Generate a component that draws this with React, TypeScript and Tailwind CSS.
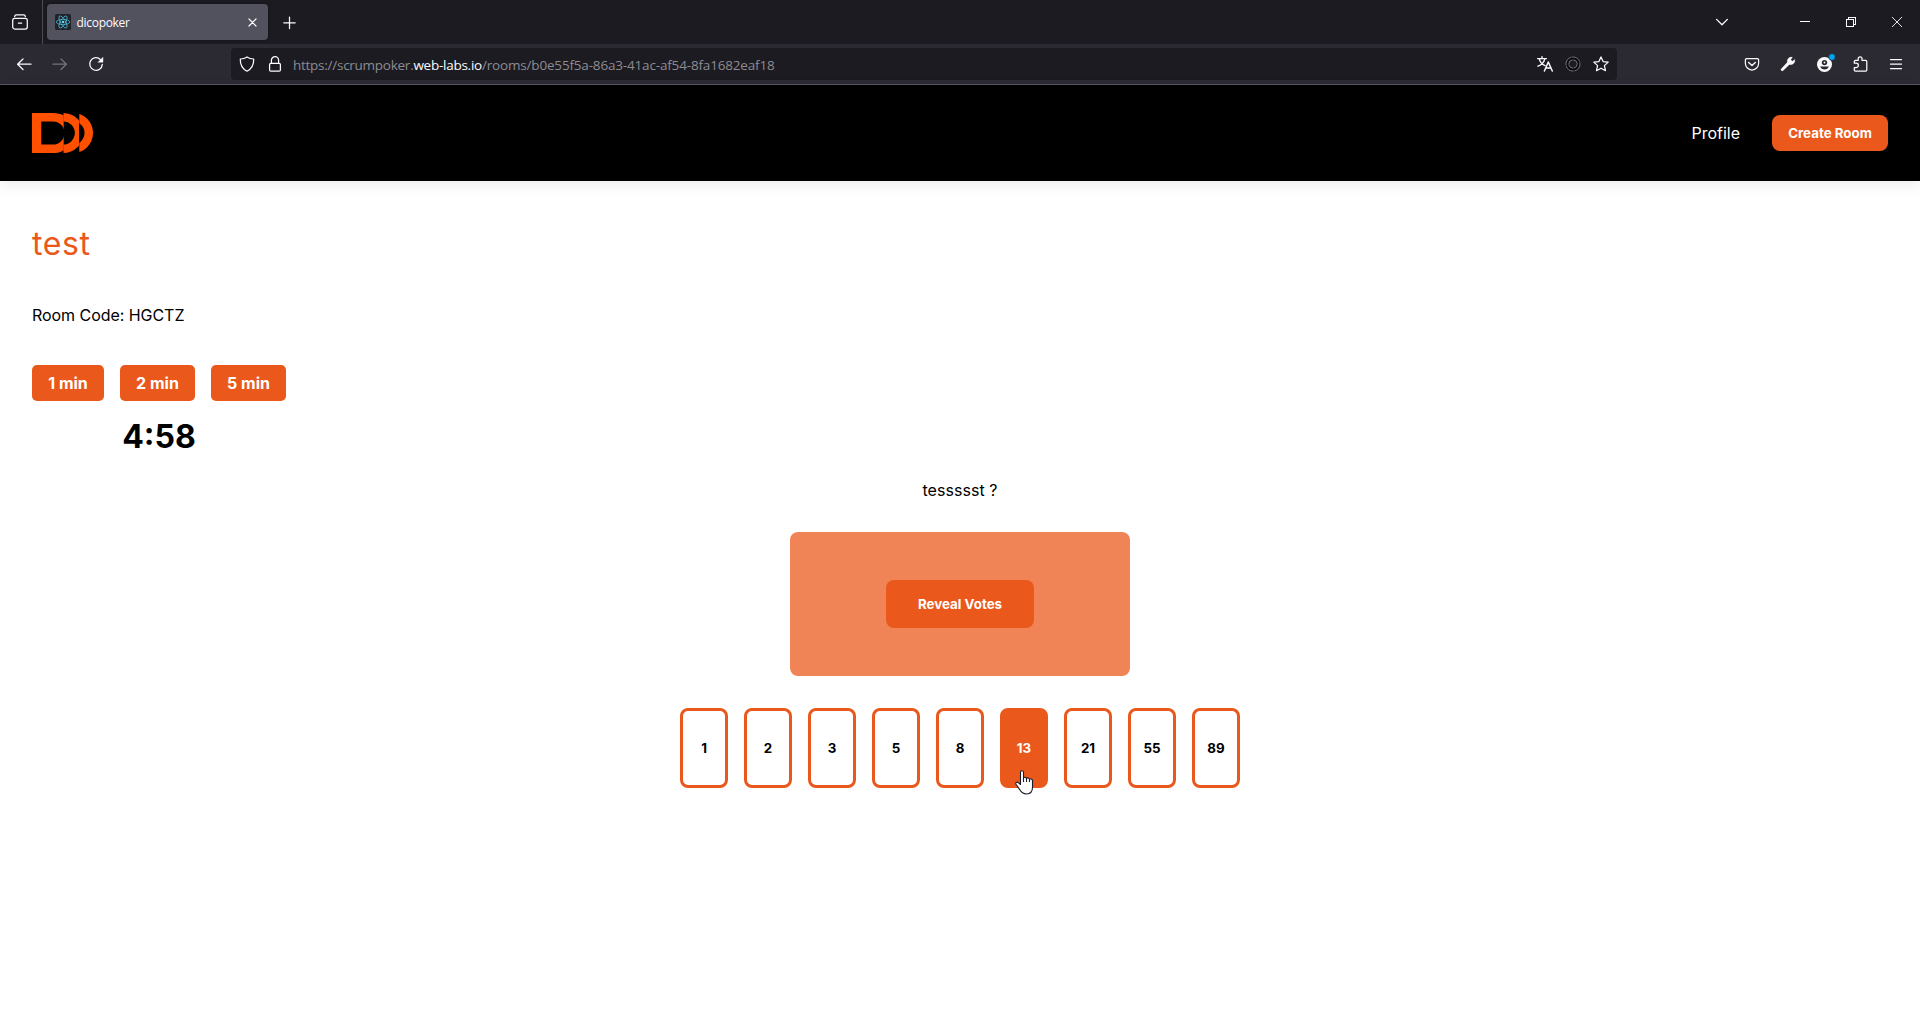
import type { ReactNode } from "react";

const CARDS = [1, 2, 3, 5, 8, 13, 21, 55, 89];
const SELECTED = 13;

const TIMERS = [
  { minutes: 1, width: "w-[72px]" },
  { minutes: 2, width: "w-[75px]" },
  { minutes: 5, width: "w-[75px]" },
];

function Icon({ children, className = "" }: { children: ReactNode; className?: string }) {
  return (
    <svg
      viewBox="0 0 16 16"
      className={`block size-4 shrink-0 overflow-visible ${className}`}
      fill="none"
      stroke="currentColor"
      strokeWidth="1.25"
      strokeLinecap="round"
      strokeLinejoin="round"
    >
      {children}
    </svg>
  );
}

function ReactFavicon() {
  return (
    <svg viewBox="0 0 16 16" className="block size-4 shrink-0">
      <rect width="16" height="16" rx="1.5" fill="#20232a" />
      <g fill="none" stroke="#4fb3cb" strokeWidth="0.8">
        <ellipse cx="8" cy="8" rx="6.8" ry="2.6" />
        <ellipse cx="8" cy="8" rx="6.8" ry="2.6" transform="rotate(60 8 8)" />
        <ellipse cx="8" cy="8" rx="6.8" ry="2.6" transform="rotate(120 8 8)" />
      </g>
      <circle cx="8" cy="8" r="1.3" fill="#61dafb" />
    </svg>
  );
}

function TabBar() {
  return (
    <div className="flex h-11 items-center bg-[#1c1b22] text-[#fbfbfe]">
      <div className="flex h-full w-[43px] items-center border-r border-[#4a4a55] pl-3">
        <Icon>
          <path d="M2.6 2.6C2.7 1.4 3.4.9 4.4.9h7.2c1 0 1.7.5 1.8 1.7" />
          <rect x="0.7" y="4.4" width="14.6" height="10.6" rx="2" />
          <path d="M6.4 9.2h3.2" />
        </Icon>
      </div>
      <div className="ml-1 flex h-9 w-[221px] items-center rounded bg-[#52525e] pl-2 pr-[11px] shadow-[0_0_3px_rgba(0,0,0,0.4)]">
        <ReactFavicon />
        <span className="ml-[5.5px] mt-[2px] flex-1 font-['Open_Sans','Noto_Sans',sans-serif] text-[12px] leading-4 tracking-[-0.3px]">
          dicopoker
        </span>
        <svg viewBox="0 0 9 9" className="block size-[9px]" stroke="currentColor" strokeWidth="1.2" strokeLinecap="round">
          <path d="M1 1l7 7M8 1L1 8" />
        </svg>
      </div>
      <Icon className="ml-[13px]">
        <path d="M8.500 3v11.500M2.800 8.800h11.400" />
      </Icon>
      <div className="ml-auto flex items-center">
        <Icon className="mr-[70px]">
          <path d="M2.600 5.400L8 10.800l5.400-5.400" strokeWidth="1.300" />
        </Icon>
        <svg viewBox="0 0 10 10" className="mr-9 block size-[10px]" stroke="currentColor" shapeRendering="crispEdges">
          <path d="M0 4.500h10" />
        </svg>
        <svg viewBox="0 0 10 10" className="mr-9 block size-[10px]" stroke="currentColor" fill="none" shapeRendering="crispEdges">
          <path d="M.5 2.500h7v7h-7zM2.500 2V.5h7v7H8" />
        </svg>
        <svg viewBox="0 0 10 10" className="mr-[18px] block size-[10px]" stroke="currentColor">
          <path d="M0 0l10 10M10 0L0 10" strokeWidth="0.900" />
        </svg>
      </div>
    </div>
  );
}

function Toolbar() {
  return (
    <div className="flex h-[41px] items-center border-b border-[#55545f] bg-[#2b2a33] text-[#fbfbfe]">
      <Icon className="ml-4">
        <path d="M15 8.200H1.600M7 3L1.600 8.200 7 13.500" />
      </Icon>
      <Icon className="ml-5 text-[#75747b]">
        <path d="M1 8.200h13.400M9 3l5.400 5.200L9 13.500" />
      </Icon>
      <Icon className="ml-5">
        <path d="M14.300 8.400A6.300 6.300 0 1 1 12.600 3.700" />
        <path d="M15 1.400v4.900h-4.900z" fill="currentColor" strokeWidth="0.400" />
      </Icon>
      <div className="ml-[127px] flex h-8 w-[1386px] items-center rounded bg-[#1c1b22] pl-2 pr-2">
        <Icon>
          <path d="M8 .9c1.800 1.300 4.200 2 6.700 2.100.2 5.600-2 9.800-6.700 12.200C3.300 12.800 1.100 8.600 1.300 3 3.800 2.900 6.200 2.200 8 .9z" />
        </Icon>
        <Icon className="ml-3">
          <rect x="2.600" y="7.300" width="10.800" height="7.800" rx="1.200" />
          <path d="M4.400 7V4.300a3.600 3.600 0 0 1 7.200 0V7" />
        </Icon>
        <span className="ml-[10px] mt-[2px] flex-1 whitespace-nowrap font-['Open_Sans','Noto_Sans',sans-serif] text-[13.5px] leading-5 tracking-[-0.17px] text-[#8c8b91]">
          <span className="tracking-[-0.26px]">https://scrumpoker.</span>
          <span className="tracking-[-0.26px] text-[#fbfbfe]">web-labs.io</span>
          /rooms/b0e55f5a-86a3-41ac-af54-8fa1682eaf18
        </span>
        <Icon>
          <path d="M.6 2.600h8.800M5 .8v1.800M2.300 2.800C3 6 5.500 8.600 8 9.600M7.800 2.800C7 6.200 4 9 1 10.200" strokeWidth="1.400" />
          <path d="M7.400 15l3.900-9 4 9M8.800 12h5" strokeWidth="1.500" />
        </Icon>
        <Icon className="ml-3">
          <g stroke="#77767c" strokeWidth="1">
            <circle cx="8" cy="8" r="7" strokeDasharray="9 1.600" />
            <circle cx="8" cy="8" r="4.300" strokeDasharray="5.500 1.200" />
          </g>
          <circle cx="8" cy="8" r="5.600" stroke="#08080b" strokeWidth="1.500" strokeDasharray="15.500 2" />
        </Icon>
        <Icon className="ml-3">
          <path d="M8 .9l2.100 4.700 5.100.5-3.800 3.500 1.100 5.100L8 12.200l-4.500 2.500 1.100-5.100L.8 6.100l5.100-.5z" />
        </Icon>
      </div>
      <div className="ml-auto mr-4 flex items-center gap-5">
        <Icon>
          <path d="M2.700 2.600h10.600a1.300 1.300 0 0 1 1.300 1.300v3.500a6.600 6.600 0 0 1-13.200 0V3.900a1.300 1.300 0 0 1 1.300-1.300z" />
          <path d="M4.700 6.500L8 9.500l3.300-3" strokeWidth="1.400" />
        </Icon>
        <Icon>
          <path
            d="M14.800 3.500l-2.500 1.700-1.500-1.500L12.500 1.200A4.200 4.200 0 0 0 7.300 6.300L1.300 12.700a1.300 1.300 0 0 0 1.900 1.900l6.300-6.100a4.200 4.200 0 0 0 5.300-5z"
            fill="currentColor"
            strokeWidth="0.200"
          />
        </Icon>
        <Icon>
          <circle cx="8.500" cy="8.500" r="7.500" fill="currentColor" stroke="none" />
          <circle cx="8.500" cy="6.600" r="2.700" fill="#2b2a33" stroke="none" />
          <path d="M4.100 10.400h8.800c-.7 2-2.400 3-4.400 3s-3.700-1-4.400-3z" fill="#2b2a33" stroke="none" />
          <circle cx="8.500" cy="6.500" r="0.900" fill="currentColor" stroke="none" />
          <circle cx="16" cy="1" r="3.300" fill="#00a6f4" stroke="#2b2a33" strokeWidth="0.600" />
        </Icon>
        <Icon>
          <path d="M2.300 7.200V5.400c0-.7.4-1.100 1.100-1.100h2.800V2.700a1.900 1.900 0 0 1 3.800 0v1.600h3.700c.7 0 1.100.4 1.100 1.100v8.700c0 .7-.4 1.100-1.100 1.100H3.400c-.7 0-1.100-.4-1.100-1.100v-2.600h1.900a2.100 2.100 0 0 0 0-4.300z" />
        </Icon>
        <Icon>
          <path d="M2.500 3.500h11M2.500 8h11M2.500 12.500h11" />
        </Icon>
      </div>
    </div>
  );
}

function Logo() {
  return (
    <svg viewBox="0 0 62 40" className="block h-10 w-[62px]" fill="#ff5000" fillRule="evenodd">
      <defs>
        <clipPath id="logo-a">
          <rect width="31.700" height="40" />
        </clipPath>
        <clipPath id="logo-b">
          <rect x="31.300" width="15.700" height="40" />
        </clipPath>
        <clipPath id="logo-c">
          <rect x="47.300" width="15" height="40" />
        </clipPath>
      </defs>
      <path clipPath="url(#logo-a)" d="M0 0h22a20 20 0 0 1 0 40H0zM9.300 8.500v23H21a11.500 11.500 0 0 0 0-23z" />
      <path clipPath="url(#logo-b)" d="M31.300 0a20 20 0 0 1 0 40zM31.300 8.500v23a11.500 11.500 0 0 0 0-23z" />
      <path clipPath="url(#logo-c)" d="M41 0a20 20 0 0 1 0 40zM41 8.500v23a11.500 11.500 0 0 0 0-23z" />
    </svg>
  );
}

function HandCursor() {
  return (
    <svg
      viewBox="0 0 19 25"
      className="pointer-events-none absolute left-[15px] top-[62px] z-10 h-[25px] w-[19px]"
      fill="#fff"
      stroke="#1a1a2a"
      strokeWidth="1.100"
      strokeLinejoin="round"
    >
      <path d="M5.500 14.500V2.300C5.500.2 8.500.2 8.500 2.300V8.200c.3-1.400 3-1.300 3 .5.400-1.200 3-1 3 .7.500-1 3-.7 3 1.300v6.600c0 4-2 6.700-6 6.700-3.700 0-5.300-1.600-6.800-4.400L1 14.200c-.8-1.700 1-2.700 2.300-1.600z" />
      <path d="M8.500 7.500V12M11.500 8.700V12M14.500 9.500V12" fill="none" />
    </svg>
  );
}

function Header() {
  return (
    <header className="flex h-24 items-center justify-between bg-black px-8 shadow-[0_4px_14px_rgba(0,0,0,0.08)]">
      <Logo />
      <nav className="flex items-center gap-8">
        <a className="text-base text-white">Profile</a>
        <button className="h-9 w-[116px] whitespace-nowrap rounded-lg bg-[#ea591b] pt-px text-[13.333px] font-bold text-white">
          Create Room
        </button>
      </nav>
    </header>
  );
}

export default function App() {
  return (
    <div className="flex h-[1032px] flex-col overflow-hidden bg-white font-['Inter',sans-serif] text-black">
      <TabBar />
      <Toolbar />
      <Header />
      <main className="flex flex-col px-8 pt-10">
        <h1 className="text-[32px] leading-[46px] tracking-[0.6px] text-[#ea591b]">test</h1>
        <p className="mt-9 text-base leading-6 tracking-[-0.05px]">Room Code: HGCTZ</p>
        <div className="mt-[38px] flex w-fit flex-col items-center">
          <div className="flex gap-4">
            {TIMERS.map(({ minutes, width }) => (
              <button key={minutes} className={`h-9 rounded-[5px] bg-[#ea591b] text-base font-bold text-white ${width}`}>
                {minutes} min
              </button>
            ))}
          </div>
          <div className="mt-4 text-[32px] font-bold leading-10">4:58</div>
        </div>
        <section className="mt-[21px] flex flex-col items-center">
          <p className="text-base leading-6 tracking-[0.05px]">tessssst ?</p>
          <div className="mt-[30px] flex h-36 w-[340px] items-center justify-center rounded-lg bg-[#f08456]">
            <button className="h-12 w-[148px] rounded-lg bg-[#ea591b] pt-px text-[13.333px] font-bold text-white">
              Reveal Votes
            </button>
          </div>
          <div className="mt-8 flex gap-4">
            {CARDS.map((n) => (
              <div key={n} className="relative">
                <button
                  className={`block h-20 w-12 rounded-lg border-3 border-[#ea591b] pt-px text-[13.333px] font-bold ${
                    n === SELECTED ? "bg-[#ea591b] text-white" : "bg-white text-black"
                  }`}
                >
                  {n}
                </button>
                {n === SELECTED && <HandCursor />}
              </div>
            ))}
          </div>
        </section>
      </main>
    </div>
  );
}
